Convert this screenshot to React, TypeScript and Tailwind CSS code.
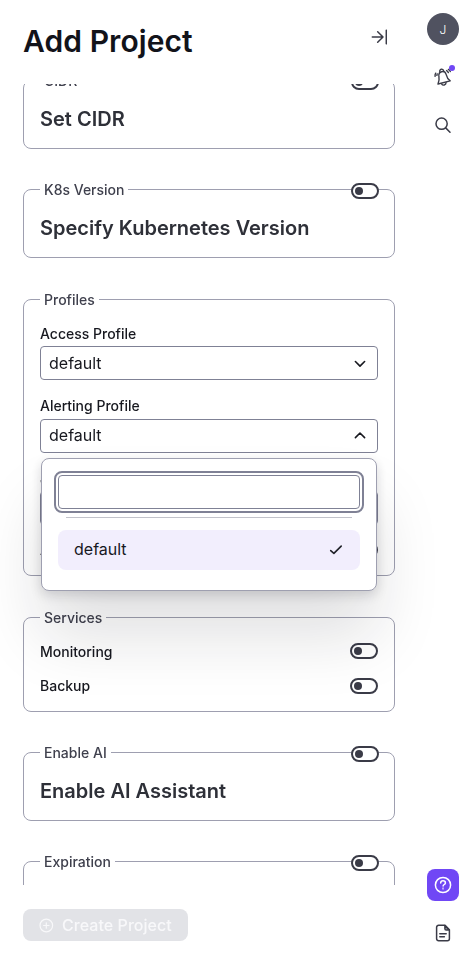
import { useState, type ReactNode } from "react";

function ArrowToLine() {
  return (
    <svg className="h-4 w-4" viewBox="0 0 16 16" fill="none" stroke="#3a3b47" strokeWidth="1.5" strokeLinecap="round" strokeLinejoin="round">
      <path d="M1.3 8H12M6.7 2.8 12 8l-5.3 5.2M15.3 1.2v13.6" />
    </svg>
  );
}

function BellIcon() {
  return (
    <svg className="h-[18px] w-[18px]" viewBox="0 0 18 18" fill="none" stroke="#3a3b47" strokeWidth="1.4" strokeLinecap="round" strokeLinejoin="round">
      <path d="M4.9 7.9C4.6 5.8 5.6 4.2 7.6 3.7s3.9.5 4.5 2.7c.7 2.9 1.4 4.6 4.1 6.5L4 16c1.2-3 1.4-5.3.9-8.1Z" />
      <path d="M5.9 4.2C5.5 2.7 6 1.5 7.3 1.2s2.2.5 2.6 2.1M7.6 15.9c.6 1 1.6 1.4 2.7 1.1s1.8-1.1 1.8-2.4" />
      <path d="M1.1 8.4c-.2-1.3 0-2.3.6-3.2M12.6 2.6c.9.5 1.4 1.1 1.8 2M14.4 1.4c.9.5 1.5 1.2 1.9 2.1" />
      <path d="M2.9 7.4c0-.6.1-1 .3-1.5" />
    </svg>
  );
}

function SearchIcon() {
  return (
    <svg className="h-4 w-4" viewBox="0 0 16 16" fill="none" stroke="#3a3b47" strokeWidth="1.5" strokeLinecap="round">
      <circle cx="6.6" cy="6.7" r="5.6" />
      <path d="m10.7 10.9 4.3 4.3" />
    </svg>
  );
}

function HelpIcon() {
  return (
    <svg className="h-[18px] w-[18px]" viewBox="0 0 18 18" fill="none" stroke="#fff" strokeWidth="1.5" strokeLinecap="round" strokeLinejoin="round">
      <circle cx="9" cy="9" r="7.6" />
      <path d="M6.7 7c0-1.3.9-2.2 2.3-2.2s2.4.8 2.4 2.1c0 1.6-2.3 1.6-2.3 3.2" />
      <circle cx="9.05" cy="12.6" r=".25" />
    </svg>
  );
}

function FileIcon() {
  return (
    <svg className="h-[18px] w-[18px]" viewBox="0 0 18 18" fill="none" stroke="#3a3b47" strokeWidth="1.5" strokeLinecap="round" strokeLinejoin="round">
      <path d="M11 1.3H4.6a2 2 0 0 0-2 2v11.4a2 2 0 0 0 2 2h8.8a2 2 0 0 0 2-2V5.8L11 1.3Z" />
      <path d="M10.9 1.5v3.2c0 .8.5 1.3 1.3 1.3h3z" fill="#3a3b47" fillOpacity=".45" />
      <path d="M5.8 9.7h6.4M5.8 12.8h4.6" />
    </svg>
  );
}

function PlusCircle() {
  return (
    <svg className="h-4 w-4" viewBox="0 0 16 16" fill="none" stroke="#f8f8fa" strokeWidth="1.2" strokeLinecap="round">
      <circle cx="8.3" cy="8.5" r="6.3" />
      <path d="M5.6 8.5H11M8.3 5.8v5.4" />
    </svg>
  );
}

function Toggle() {
  const [on, setOn] = useState(false);
  return (
    <button
      type="button"
      role="switch"
      aria-checked={on}
      onClick={() => setOn(!on)}
      className={`flex h-4 w-7 shrink-0 items-center rounded-full border-2 border-[#3a3b47] bg-white px-0.5 ${on ? "justify-end" : "justify-start"}`}
    >
      <span className="h-2 w-2 rounded-full bg-[#3a3b47]" />
    </button>
  );
}

function Section({ legend, toggle = false, className, children }: { legend: string; toggle?: boolean; className: string; children?: ReactNode }) {
  return (
    <fieldset className={`relative shrink-0 rounded-lg border border-[#9e9fb0] px-4 ${className}`}>
      <legend className="h-[21px] px-1 text-sm leading-[21px] font-medium text-[#3f404d]">{legend}</legend>
      {toggle && (
        <div className="absolute -top-[17px] right-[15px]">
          <Toggle />
        </div>
      )}
      {children}
    </fieldset>
  );
}

function Heading({ children }: { children: ReactNode }) {
  return <h2 className="mt-4 text-xl leading-6 font-semibold text-[#2e3038]">{children}</h2>;
}

function Select({ label, open = false }: { label: string; open?: boolean }) {
  return (
    <div>
      <div className={`h-[22px] text-sm font-medium text-[#17181f] ${open ? "leading-[18px]" : "leading-5"}`}>{label}</div>
      <button type="button" className="flex h-[34px] w-full items-center justify-between rounded-[4px] border border-[#7f8195] pr-2.5 pl-2 text-base leading-6 text-[#17181f]">
        <span className={open ? "pb-0.5" : ""}>default</span>
        <svg className="h-[14px] w-[14px]" viewBox="0 0 14 14" fill="none" stroke="#17181f" strokeWidth="1.6" strokeLinecap="round" strokeLinejoin="round">
          <path d={open ? "M2.4 8.6 7 4l4.6 4.6" : "M2.4 5.5 7 10.1l4.6-4.6"} />
        </svg>
      </button>
    </div>
  );
}

function SwitchRow({ label, labelClass = "" }: { label: string; labelClass?: string }) {
  return (
    <div className="flex h-4 items-center justify-between text-sm leading-4 font-medium text-[#17181f]">
      <span className={labelClass}>{label}</span>
      <Toggle />
    </div>
  );
}

export default function App() {
  return (
    <div className="relative flex h-[965px] w-[463px] overflow-hidden bg-white font-['Inter',sans-serif]">
      <main className="flex w-[395px] shrink-0 flex-col pl-[23px]">
        <header className="flex h-[84px] shrink-0 items-start justify-between pr-2">
          <h1 className="pt-[21px] text-[30px] leading-10 font-semibold tracking-[0.07px] text-[#12131a]">Add Project</h1>
          <button type="button" aria-label="Close" className="mt-[29px]">
            <ArrowToLine />
          </button>
        </header>

        <div className="flex h-[801px] flex-col overflow-hidden will-change-transform">
          <Section legend="CIDR" toggle className="-mt-[14px] h-[79px]">
            <Heading>Set CIDR</Heading>
          </Section>
          <Section legend="K8s Version" toggle className="mt-[30px] h-[79px]">
            <Heading>Specify Kubernetes Version</Heading>
          </Section>
          <Section legend="Profiles" className="mt-[31px] h-[287px]">
            <div className="flex flex-col pt-[14px]">
              <Select label="Access Profile" />
              <div className="mt-[17px]">
                <Select label="Alerting Profile" open />
              </div>
              <div className="mt-4">
                <Select label="Job Profile" />
              </div>
            </div>
            <div className="mt-[17px]">
              <SwitchRow label="Audit" />
            </div>
          </Section>
          <Section legend="Services" className="mt-[31px] h-[105px]">
            <div className="flex flex-col gap-[19px] pt-[15px]">
              <SwitchRow label="Monitoring" labelClass="pt-0.5" />
              <SwitchRow label="Backup" />
            </div>
          </Section>
          <Section legend="Enable AI" toggle className="mt-[30px] h-[79px]">
            <Heading>Enable AI Assistant</Heading>
          </Section>
          <Section legend="Expiration" toggle className="mt-[30px] h-[79px]" />
        </div>

        <footer className="pt-6 will-change-transform">
          <button type="button" disabled className="flex h-8 w-[165px] items-center gap-2 rounded-lg bg-[#e2e3e7] pl-[15px] text-base leading-6 font-medium tracking-[0.05px] text-[#f8f8fa]">
            <PlusCircle />
            Create Project
          </button>
        </footer>
      </main>

      <nav className="ml-8 flex w-8 shrink-0 flex-col items-center pt-[13px]">
        <div className="flex h-8 w-8 items-center justify-center rounded-full bg-[#505260] pt-0.5 text-xs font-light text-white">J</div>
        <button type="button" aria-label="Notifications" className="relative mt-4 flex h-8 w-8 items-center justify-center">
          <BellIcon />
          <span className="absolute top-1 right-1 h-1.5 w-1.5 rounded-full bg-[#7047f5]" />
        </button>
        <button type="button" aria-label="Search" className="mt-4 flex h-8 w-8 items-center justify-center">
          <SearchIcon />
        </button>
        <button type="button" aria-label="Help" className="mt-auto flex h-8 w-8 items-center justify-center rounded-lg bg-[#7047f5]">
          <HelpIcon />
        </button>
        <button type="button" aria-label="Docs" className="mt-4 mb-4 flex h-8 w-8 items-center justify-center">
          <FileIcon />
        </button>
      </nav>

      <div className="absolute top-[458px] left-[41px] h-[133px] w-[336px] rounded-lg border border-[#9e9fb0] bg-white px-4 pt-4 shadow-[0_4px_12px_rgba(20,21,30,0.16),0_46px_64px_rgba(20,21,30,0.13)]">
        <input aria-label="Filter profiles" className="block h-[34px] w-full rounded-[4px] border border-[#7f8195] bg-white px-2 outline-2 outline-offset-2 outline-[#7f8195]" />
        <div className="mx-2 mt-2 h-px bg-[#c2c3cb]" />
        <div className="mt-3 flex h-10 items-center justify-between rounded-lg bg-[#f2eefd] px-4 text-base leading-6 text-[#17181f]">
          <span className="pb-0.5">default</span>
          <svg className="h-4 w-4" viewBox="0 0 16 16" fill="none" stroke="#202128" strokeWidth="1.6" strokeLinecap="round" strokeLinejoin="round">
            <path d="M2.7 8.6l3.2 2.8L13.2 4.1" />
          </svg>
        </div>
      </div>
    </div>
  );
}
